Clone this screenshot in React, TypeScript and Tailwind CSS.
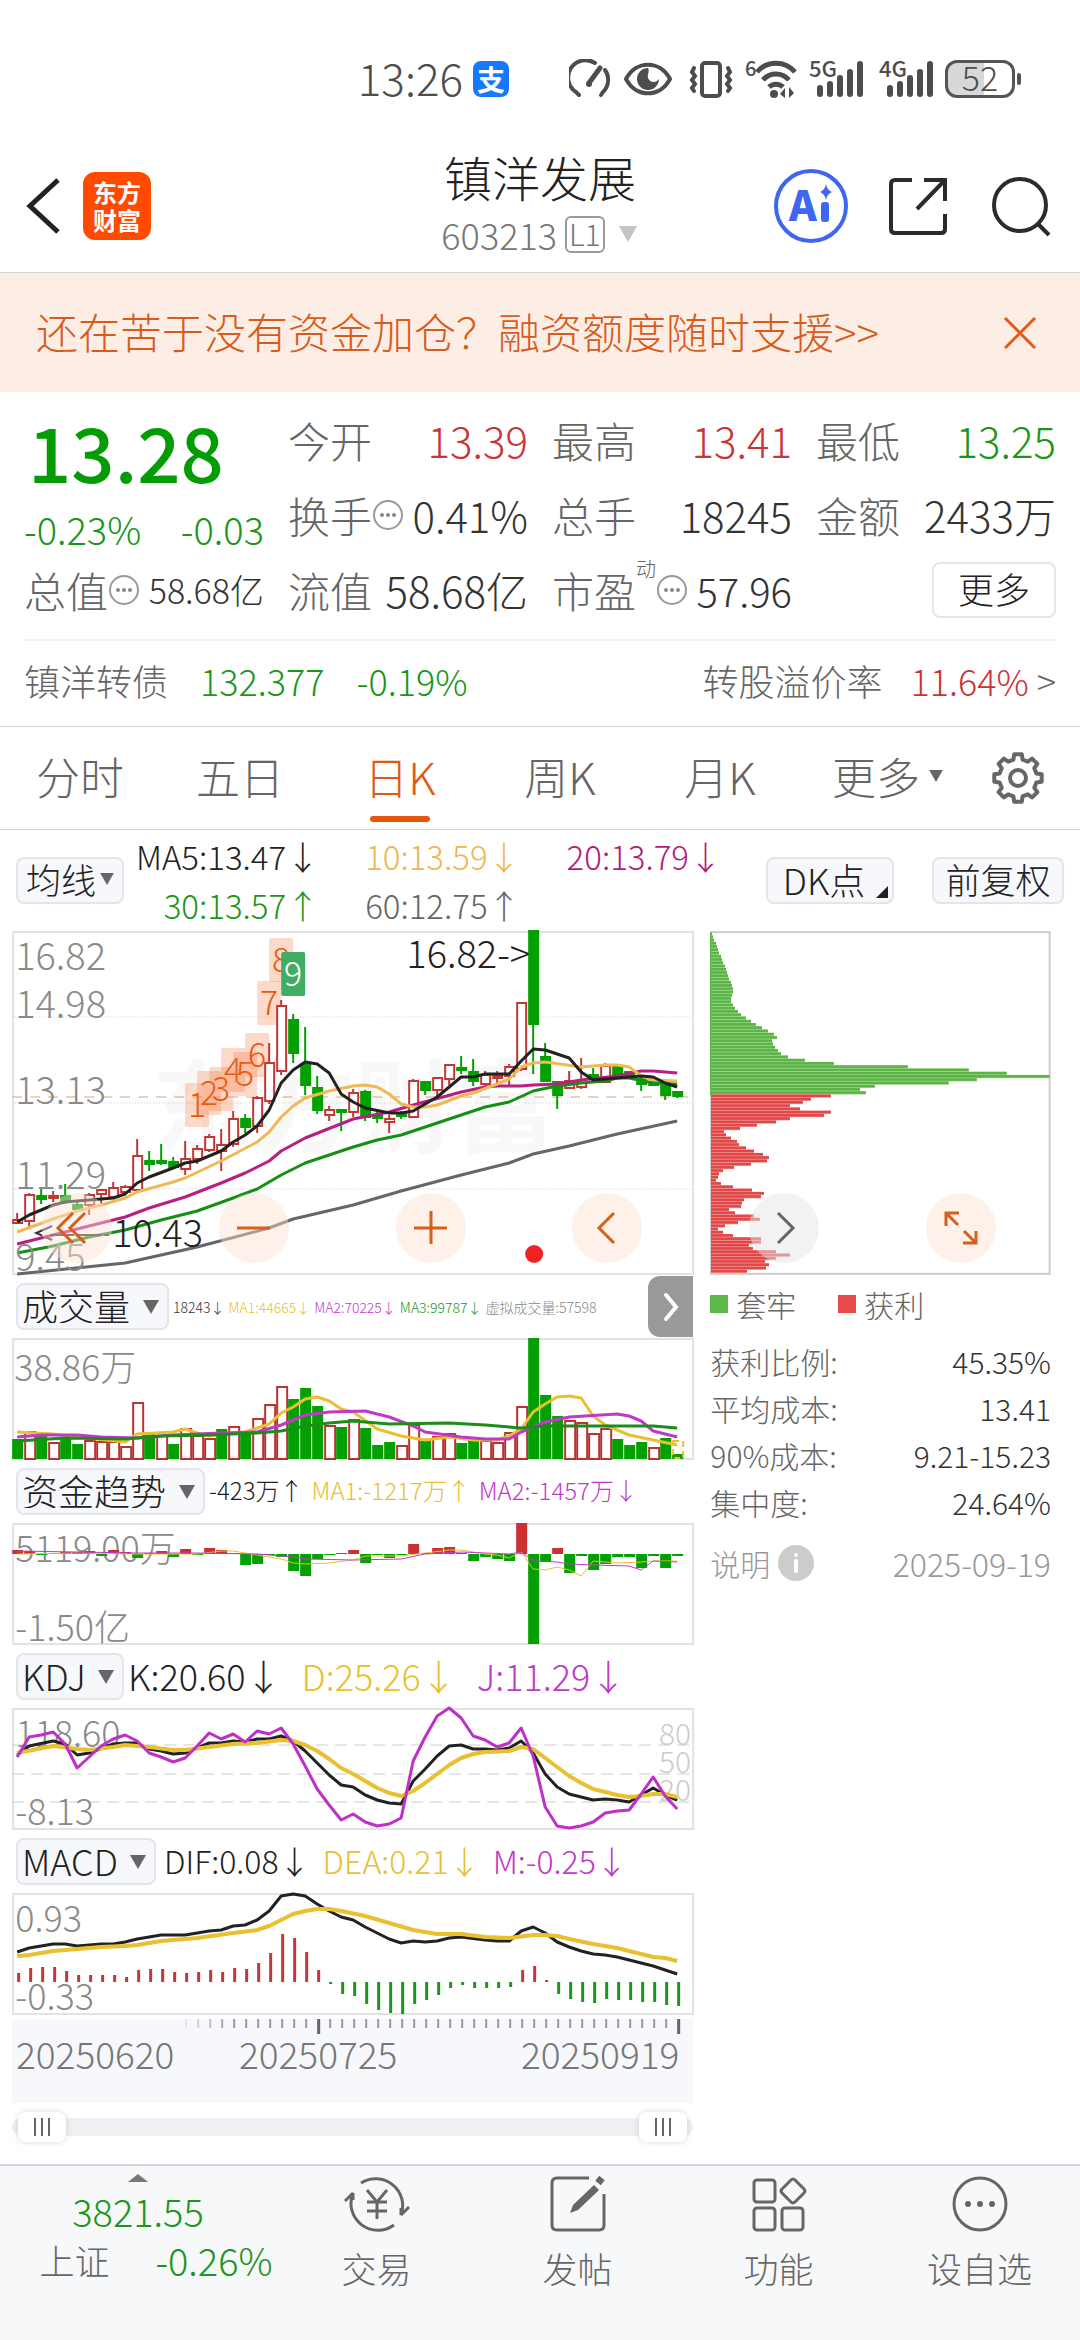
import React from 'react';

type Point = [number, number];
// [up, high, body top, body bottom, low], in chart units from the top
type Candle = [number, number, number, number, number];

const STEP = 12;
const centerX = (i: number) => 5 + i * STEP;

const candles: Candle[] = [
  [1, 282, 289, 292, 292], [1, 262, 264, 290, 297], [0, 258, 265, 268, 273], [1, 260, 265, 267, 271],
  [0, 253, 265, 271, 273], [0, 270, 274, 278, 280], [1, 262, 264, 274, 284], [1, 258, 259, 263, 273],
  [1, 251, 257, 266, 267], [1, 254, 256, 261, 264], [1, 208, 225, 259, 260], [0, 220, 230, 233, 240],
  [0, 213, 230, 232, 234], [0, 226, 231, 236, 238], [1, 210, 228, 238, 244], [1, 214, 218, 228, 233],
  [1, 203, 206, 219, 221], [1, 198, 214, 220, 240], [1, 180, 188, 213, 216], [0, 183, 188, 196, 202],
  [1, 165, 167, 195, 202], [1, 112, 132, 170, 173], [1, 69, 75, 140, 144], [0, 83, 89, 122, 132],
  [0, 96, 134, 154, 164], [0, 145, 157, 179, 183], [1, 175, 179, 184, 190], [0, 179, 179, 181, 200],
  [1, 158, 162, 181, 186], [0, 159, 161, 186, 190], [0, 180, 185, 187, 192], [1, 184, 188, 191, 202],
  [0, 180, 183, 185, 188], [1, 148, 150, 186, 187], [0, 150, 151, 159, 164], [1, 146, 147, 159, 165],
  [1, 133, 134, 148, 154], [0, 125, 137, 139, 143], [0, 128, 141, 150, 155], [1, 140, 144, 153, 156],
  [1, 140, 145, 147, 155], [1, 133, 136, 145, 155], [1, 71, 72, 138, 140], [0, 0, 0, 93, 143],
  [0, 112, 126, 150, 151], [0, 151, 151, 164, 178], [1, 140, 150, 157, 158], [1, 127, 152, 156, 158],
  [0, 137, 144, 147, 150], [1, 132, 135, 151, 152], [0, 135, 135, 145, 146], [0, 140, 141, 145, 147],
  [0, 146, 148, 153, 160], [0, 150, 151, 154, 155], [0, 152, 153, 164, 169], [0, 160, 161, 165, 167],
];

const ma5: Point[] = [[0,291],[1,284],[2,279],[3,274],[4,271],[6,269],[8,267],[9,263],[10,252],[11,246],[13,237],[14,232],[15,230],[17,220],[18,211],[19,204],[20,195],[21,179],[22,152],[23,139],[24,131],[25,133],[26,142],[27,163],[28,171],[29,177],[31,182],[32,182],[33,180],[35,166],[36,156],[37,146],[38,146],[39,143],[41,143],[42,130],[43,118],[44,119],[45,123],[46,127],[47,141],[48,149],[50,147],[52,145],[53,146],[54,152],[55,156]];
const ma10: Point[] = [[0,301],[3,288],[5,280],[7,274],[9,267],[10,261],[13,251],[14,247],[17,230],[20,211],[21,201],[22,186],[23,175],[24,167],[26,160],[28,155],[29,154],[30,156],[31,163],[32,173],[33,176],[34,176],[35,174],[37,165],[38,162],[40,153],[41,148],[42,136],[43,132],[44,131],[47,136],[49,134],[50,134],[51,136],[52,145],[53,149],[55,150]];
const ma20: Point[] = [[0,313],[3,304],[6,295],[9,286],[11,277],[14,266],[17,252],[19,242],[21,230],[22,220],[24,207],[28,188],[31,181],[33,174],[37,161],[39,156],[40,155],[42,155],[43,154],[45,153],[47,149],[50,145],[52,140],[53,140],[55,142]];
const ma30: Point[] = [[0,322],[3,315],[6,306],[9,299],[12,289],[15,280],[18,267],[20,258],[22,244],[24,232],[28,216],[30,209],[32,204],[34,196],[37,184],[39,176],[41,171],[43,160],[45,155],[47,152],[49,150],[50,147],[51,147],[53,152],[55,153]];
const ma60: Point[] = [[0,343],[9,332],[15,316],[21,297],[23,288],[28,274],[32,260],[37,244],[41,232],[43,223],[46,215],[50,203],[55,190]];

const countBadges = [
  { n: 1, x: 173, y: 152 }, { n: 2, x: 185, y: 140 }, { n: 3, x: 197, y: 136 }, { n: 4, x: 209, y: 117 },
  { n: 5, x: 221, y: 121 }, { n: 6, x: 233, y: 102 }, { n: 7, x: 245, y: 50 }, { n: 8, x: 257, y: 7 },
];

// Positive: rising day, negative: falling day
const volumes = [-20, 27, -25, 16, -21, -15, 18, 17, 17, 12, 56, -25, 23, -15, 30, 23, 20, -30, 32, -28, 40, 54, 72, -60, -71, -53, 33, -32, 39, -31, -14, -17, 13, 34, -18, 22, 25, -16, -19, 18, 16, 26, 52, -121, -64, -43, 38, 36, 25, 30, -20, -14, -17, 11, -21, -5];
const volMa1: Point[] = [[0,94],[3,96],[5,99],[9,104],[10,96],[13,94],[14,91],[15,95],[16,98],[17,96],[19,94],[21,86],[22,75],[23,69],[24,61],[25,59],[26,63],[27,71],[28,74],[30,91],[32,98],[34,102],[36,99],[38,102],[40,102],[41,98],[42,91],[43,74],[44,66],[45,59],[46,58],[47,60],[48,78],[49,87],[51,97],[53,102],[55,107]];
const volMa2: Point[] = [[0,99],[2,97],[5,97],[7,99],[10,100],[13,97],[17,95],[20,94],[22,87],[24,77],[26,74],[29,73],[31,79],[33,88],[34,94],[37,99],[39,101],[41,101],[42,94],[44,84],[46,79],[50,76],[51,78],[52,83],[53,93],[55,99]];
const volMa3: Point[] = [[0,103],[4,100],[9,101],[12,98],[16,97],[20,95],[22,93],[24,88],[26,85],[28,83],[31,86],[36,85],[39,87],[42,90],[44,88],[49,88],[53,88],[55,90]];

const funds = [4, 3, -1, 1, 2, 2, 3, -2, 4, 2, -4, 1, 3, -3, 5, -1, 6, 4, 1, -11, -10, -1, -3, -17, -22, -5, -1, 1, 4, -9, -1, -4, -1, 10, 1, 6, 7, 1, -7, -3, -5, -7, 31, -90, -8, 6, -19, -2, -16, -10, -3, -3, -14, -2, -14, -2];
const fundMa1: Point[] = [[0,31],[5,30],[10,31],[15,31],[17,28],[18,28],[20,32],[22,36],[23,40],[24,41],[26,40],[28,37],[29,33],[32,33],[34,30],[36,27],[37,27],[39,31],[40,32],[41,35],[42,29],[43,46],[44,47],[45,44],[46,47],[47,53],[48,38],[50,40],[52,39],[53,38],[55,38]];
const fundMa2: Point[] = [[0,28],[5,29],[10,30],[15,30],[20,31],[23,34],[24,36],[28,37],[32,36],[34,31],[37,29],[41,31],[42,29],[43,38],[45,39],[46,41],[48,42],[51,43],[52,47],[53,38],[55,39]];

const kdjK: Point[] = [[0,47],[1,38],[3,33],[4,36],[5,47],[6,45],[8,36],[9,35],[10,35],[11,41],[12,43],[13,46],[14,45],[16,35],[17,35],[18,33],[19,34],[20,31],[21,31],[22,28],[23,33],[24,43],[25,55],[26,67],[27,77],[28,79],[29,87],[30,92],[31,95],[32,96],[33,73],[34,61],[35,48],[36,38],[37,37],[38,41],[39,41],[40,42],[41,40],[42,33],[43,45],[44,66],[45,79],[46,86],[47,89],[48,92],[49,91],[50,92],[51,94],[52,87],[53,80],[54,87],[55,92]];
const kdjD: Point[] = [[0,45],[3,38],[5,41],[6,42],[8,39],[9,37],[11,39],[13,42],[14,42],[16,39],[18,36],[20,35],[22,32],[23,33],[24,37],[25,43],[26,51],[27,60],[28,66],[29,73],[30,80],[31,85],[32,88],[33,83],[34,75],[35,66],[36,57],[37,50],[38,46],[39,44],[41,43],[42,39],[43,41],[44,50],[45,59],[46,68],[47,75],[48,81],[50,87],[51,89],[52,88],[53,86],[54,86],[55,89]];
const kdjJ: Point[] = [[0,49],[1,29],[2,27],[3,24],[4,36],[5,60],[6,49],[7,38],[8,31],[9,27],[10,33],[11,45],[12,49],[13,54],[14,50],[15,38],[16,25],[17,31],[18,26],[19,34],[20,23],[21,26],[22,20],[23,36],[24,58],[25,81],[26,97],[27,112],[28,106],[29,114],[30,118],[31,116],[32,110],[33,53],[34,29],[35,8],[36,0],[37,10],[38,28],[39,32],[40,39],[41,35],[42,20],[43,48],[44,99],[45,118],[46,120],[47,118],[48,114],[49,105],[50,103],[51,102],[52,86],[53,69],[54,88],[55,101]];

const macdBars = [9, 14, 15, 15, 11, 7, 7, 7, 7, 5, 12, 13, 13, 10, 9, 10, 12, 10, 14, 13, 19, 29, 48, 44, 30, 12, -2, -12, -14, -22, -28, -31, -32, -22, -18, -13, -6, -3, -6, -6, -6, -5, 12, 16, 2, -12, -17, -20, -21, -17, -18, -18, -20, -20, -23, -24];
const dif: Point[] = [[0,59],[1,55],[3,51],[4,51],[5,53],[7,51],[8,51],[9,49],[10,46],[12,42],[14,42],[16,38],[17,37],[18,33],[19,32],[20,27],[21,18],[22,3],[23,1],[24,3],[25,11],[26,18],[27,24],[28,27],[29,34],[30,40],[31,46],[32,50],[33,48],[34,49],[35,48],[36,45],[37,44],[39,47],[40,48],[41,48],[42,38],[43,34],[44,40],[45,49],[46,54],[47,58],[48,61],[49,62],[50,64],[51,67],[53,73],[55,81]];
const dea: Point[] = [[0,63],[1,62],[3,58],[5,56],[7,54],[9,53],[10,52],[12,48],[15,45],[18,40],[20,37],[21,33],[22,27],[23,21],[24,18],[25,16],[26,16],[27,18],[29,23],[31,30],[33,37],[35,41],[37,41],[39,44],[41,45],[43,42],[44,42],[45,43],[46,46],[48,51],[50,55],[53,64],[54,65],[55,68]];

const trapped = [1, 2, 3, 5, 6, 7, 8, 10, 11, 12, 14, 15, 16, 17, 18, 20, 21, 22, 22, 21, 20, 20, 22, 24, 27, 30, 35, 40, 45, 51, 57, 63, 66, 61, 62, 64, 67, 70, 77, 94, 123, 197, 258, 296, 339, 266, 238, 164, 149, 155];
const profit = [120, 100, 92, 79, 89, 120, 113, 79, 65, 46, 29, 13, 15, 20, 26, 28, 35, 43, 52, 58, 56, 40, 23, 12, 8, 7, 5, 10, 22, 41, 53, 50, 33, 31, 30, 18, 24, 43, 49, 27, 14, 7, 12, 22, 50, 50, 38, 42, 65, 79, 65, 54, 58, 55, 36];

function Line({ data, color, width = 3 }: { data: Point[]; color: string; width?: number }) {
  return (
    <polyline
      points={data.map(([i, y]) => `${centerX(i)},${y}`).join(' ')}
      fill="none"
      stroke={color}
      strokeWidth={width}
      strokeLinejoin="round"
    />
  );
}

function SubChart({ label, children }: { label: string; children: React.ReactNode }) {
  return (
    <svg viewBox="0 0 681 122" className="block h-[122px] w-full overflow-visible" role="img" aria-label={label}>
      <rect x="1" y="1" width="680" height="120" fill="none" stroke="#e2e2e2" strokeWidth="2" />
      {children}
    </svg>
  );
}

function Triangle({ className }: { className: string }) {
  return (
    <svg viewBox="0 0 16 14" className={className} aria-hidden="true">
      <path d="M0 0H16L8 14Z" fill="currentColor" />
    </svg>
  );
}

function IndicatorSelect({ name }: { name: string }) {
  return (
    <div className="relative flex h-[47px] shrink-0 items-center rounded-lg border-2 border-[#e2e5ea] bg-[#f7f8fb]">
      <select aria-label={name} className="h-full appearance-none pb-1 pl-1 pr-9 text-4xl leading-none text-[#222] outline-none">
        <option>{name}</option>
      </select>
      <Triangle className="pointer-events-none absolute right-2 h-[14px] w-4 text-[#666]" />
    </div>
  );
}

function MoreDots() {
  return (
    <svg viewBox="0 0 32 32" className="h-8 w-8 shrink-0" aria-hidden="true">
      <circle cx="16" cy="16" r="14" fill="none" stroke="#999" strokeWidth="2" />
      <circle cx="10" cy="16" r="2" fill="#888" />
      <circle cx="16" cy="16" r="2" fill="#888" />
      <circle cx="22" cy="16" r="2" fill="#888" />
    </svg>
  );
}

function Signal({ label }: { label: string }) {
  return (
    <svg viewBox="0 0 54 40" className="h-10 w-[54px] overflow-visible" aria-hidden="true">
      <text x="0" y="18" fontSize="22" fontWeight="500" fill="#4d4d4d">{label}</text>
      {[12, 16, 22, 28, 36].map((h, i) => (
        <rect key={i} x={8 + i * 10} y={38 - h} width="6" height={h} rx="3" fill="#4d4d4d" />
      ))}
    </svg>
  );
}

function StatusBar() {
  return (
    <div className="flex h-[140px] items-start justify-end pr-[59px] pt-[52px] text-[#4d4d4d]">
      <div className="flex h-[54px] items-center">
        <span className="pb-1 text-[44px] leading-none">13:26</span>
        <span className="ml-[10px] flex h-9 w-9 items-center justify-center rounded-lg bg-[#1677ff] text-[28px] font-bold leading-none text-white">支</span>
        <svg viewBox="0 0 42 40" className="ml-[60px] h-10 w-[42px]" fill="none" stroke="#4d4d4d" strokeWidth="4" strokeLinecap="round" aria-hidden="true">
          <path d="M10 36L7 33A17 17 0 0 1 26 4" />
          <path d="M36 11A17 17 0 0 1 34 33L32 36" />
          <path d="M20 24L31 9" strokeWidth="5" />
          <circle cx="20" cy="25" r="3" fill="#4d4d4d" stroke="none" />
        </svg>
        <svg viewBox="0 0 50 40" className="ml-3 h-10 w-[50px]" aria-hidden="true">
          <path d="M3 20C13 1 37 1 47 20C37 39 13 39 3 20Z" fill="none" stroke="#4d4d4d" strokeWidth="4" strokeLinejoin="round" />
          <path d="M25 9A11 11 0 1 0 36 20C33 24 27 24 25 19C24 15 27 13 25 9Z" fill="#4d4d4d" />
        </svg>
        <svg viewBox="0 0 44 40" className="ml-4 h-10 w-11" fill="none" stroke="#4d4d4d" strokeWidth="4" strokeLinecap="round" aria-hidden="true">
          <rect x="13" y="4" width="18" height="33" rx="3" />
          <path d="M5 9L3 13L6 17L3 21L6 25L3 29L5 32" strokeWidth="4" />
          <path d="M39 9L41 13L38 17L41 21L38 25L41 29L39 32" strokeWidth="4" />
        </svg>
        <svg viewBox="0 0 52 40" className="ml-3 h-10 w-[52px] overflow-visible" fill="none" stroke="#4d4d4d" strokeWidth="5" aria-hidden="true">
          <text x="0" y="17" fontSize="20" fontWeight="500" fill="#4d4d4d" stroke="none">6</text>
          <path d="M12 13A25 25 0 0 1 50 13M18 21A17 17 0 0 1 44 21M24 28A10 10 0 0 1 38 28" />
          <circle cx="29" cy="35" r="4" fill="#4d4d4d" stroke="none" />
          <path d="M35 35L40 29V39ZM49 34L44 28V39Z" fill="#4d4d4d" stroke="none" />
        </svg>
        <div className="ml-3 flex gap-4">
          <Signal label="5G" />
          <Signal label="4G" />
        </div>
        <div className="ml-3 flex h-[38px] w-[70px] items-center justify-center rounded-xl border-[3px] border-[#555] bg-[linear-gradient(90deg,#d8d8d8_56%,#fff_56%)] pb-1 text-[34px] leading-none">52</div>
        <span className="ml-[2px] h-3 w-1 rounded bg-[#555]" />
      </div>
    </div>
  );
}

function Header() {
  return (
    <header className="grid h-[133px] grid-cols-[1fr_auto_1fr] items-center border-b border-[#d4d4d8]">
      <div className="flex items-center pl-6">
        <button aria-label="返回">
          <svg viewBox="0 0 38 56" className="h-14 w-[38px]" fill="none" stroke="#222" strokeWidth="5" aria-hidden="true">
            <path d="M34 2L6 28L34 54" />
          </svg>
        </button>
        <div className="ml-[21px] grid h-[68px] w-[68px] place-content-center rounded-xl bg-[#ff4a00] text-center text-2xl font-bold leading-7 text-white">
          <div>东方</div>
          <div>财富</div>
        </div>
      </div>
      <div className="pb-1 text-center">
        <h1 className="text-5xl leading-[60px] text-[#222]">镇洋发展</h1>
        <div className="flex items-center justify-center gap-2 text-4xl leading-[56px] text-[#777]">
          <span>603213</span>
          <span className="flex h-[37px] items-center rounded-md border-2 border-[#999] px-[2px] pb-[2px] text-[30px] leading-none">L1</span>
          <Triangle className="ml-1 h-4 w-[22px] text-[#c4c4c4]" />
        </div>
      </div>
      <div className="flex items-center justify-end pr-[28px]">
        <button aria-label="Ai" className="flex h-[74px] w-[74px] items-center justify-center rounded-full border-4 border-[#3f66f0] text-[#3f66f0]">
          <svg viewBox="0 0 50 44" className="h-11 w-[50px] overflow-visible" aria-hidden="true">
            <text x="3" y="37" fontSize="42" fontWeight="900" fill="currentColor">A</text>
            <rect x="35" y="18" width="8" height="20" rx="3" fill="currentColor" />
            <path d="M40 0Q41 6 46 8Q41 10 40 16Q39 10 34 8Q39 6 40 0Z" fill="currentColor" />
          </svg>
        </button>
        <button aria-label="分享" className="ml-10">
          <svg viewBox="0 0 60 60" className="h-[60px] w-[60px]" fill="none" stroke="#2b2b2b" strokeWidth="4" aria-hidden="true">
            <path d="M24 4H7Q3 4 3 8V53Q3 57 7 57H53Q57 57 57 53V38" />
            <path d="M36 4H57V25M57 4L29 33" />
          </svg>
        </button>
        <button aria-label="搜索" className="ml-[42px]">
          <svg viewBox="0 0 62 62" className="h-[62px] w-[62px]" fill="none" stroke="#2b2b2b" strokeWidth="4" aria-hidden="true">
            <circle cx="30" cy="30" r="26" />
            <path d="M48 49L59 60" />
          </svg>
        </button>
      </div>
    </header>
  );
}

function Banner() {
  return (
    <div className="flex h-[119px] items-center justify-between bg-[#fceee5] pl-9 pr-11 text-[#d95b1c]">
      <a href="#financing" className="pb-1 text-[42px] leading-none">还在苦于没有资金加仓？融资额度随时支援&gt;&gt;</a>
      <button aria-label="关闭">
        <svg viewBox="0 0 32 32" className="h-8 w-8" stroke="#e8590f" strokeWidth="3" aria-hidden="true">
          <path d="M1 1L31 31M31 1L1 31" />
        </svg>
      </button>
    </div>
  );
}

function Quote({ label, value, color = 'text-[#333]', dots = false }: { label: string; value: string; color?: string; dots?: boolean }) {
  return (
    <div className="flex items-center justify-between whitespace-nowrap">
      <span className="flex items-center text-[#666]">
        {label}
        {dots && <MoreDots />}
      </span>
      <span className={color}>{value}</span>
    </div>
  );
}

function QuotePanel() {
  return (
    <section className="border-b border-[#d4d4d8] px-6 pt-[10px]">
      <div className="grid grid-cols-4 grid-rows-[75px_75px_75px] gap-x-6 text-[42px] leading-none">
        <div className="row-span-2 flex flex-col">
          <div className="pl-1 pt-2 text-[76px] font-medium leading-[80px] text-[#049c04]">13.28</div>
          <div className="mt-4 flex justify-between text-[38px] leading-[46px] text-[#1a961a]">
            <span>-0.23%</span>
            <span>-0.03</span>
          </div>
        </div>
        <Quote label="今开" value="13.39" color="text-[#c93535]" />
        <Quote label="最高" value="13.41" color="text-[#c93535]" />
        <Quote label="最低" value="13.25" color="text-[#1a961a]" />
        <Quote label="换手" value="0.41%" dots />
        <Quote label="总手" value="18245" />
        <Quote label="金额" value="2433万" />
        <div className="flex items-center justify-between whitespace-nowrap">
          <span className="flex items-center text-[#666]">总值<MoreDots /></span>
          <span className="text-[34px] text-[#333]">58.68亿</span>
        </div>
        <Quote label="流值" value="58.68亿" />
        <div className="flex items-center justify-between whitespace-nowrap">
          <span className="flex items-center text-[#666]">
            市盈
            <sup className="self-start text-xl leading-none">动</sup>
            <MoreDots />
          </span>
          <span className="text-[40px] text-[#333]">57.96</span>
        </div>
        <div className="flex items-center justify-end">
          <button className="h-14 w-[124px] rounded-lg border-2 border-[#e6e6e6] pb-1 text-4xl leading-none text-[#222]">更多</button>
        </div>
      </div>
      <a href="#bond" className="mt-3 flex h-[87px] items-center border-t-2 border-[#f5f5f5] pb-2 text-4xl leading-none text-[#666]">
        <span>镇洋转债</span>
        <span className="ml-8 text-[#1a961a]">132.377</span>
        <span className="ml-8 text-[#1a961a]">-0.19%</span>
        <span className="ml-auto">转股溢价率</span>
        <span className="ml-7 text-[#c93535]">11.64%</span>
        <span className="ml-2">&gt;</span>
      </a>
    </section>
  );
}

// Outline of an eight-toothed gear around (27, 27)
const gearPoints = Array.from({ length: 32 }, (_, i) => {
  const tooth = Math.floor(i / 4);
  const offset = [-14, -9, 9, 14][i % 4];
  const radius = i % 4 === 1 || i % 4 === 2 ? 24 : 19;
  const angle = ((tooth * 45 + offset) * Math.PI) / 180;
  return `${(27 + radius * Math.sin(angle)).toFixed(1)},${(27 - radius * Math.cos(angle)).toFixed(1)}`;
}).join(' ');

function PeriodTabs() {
  const tabs = ['分时', '五日', '日K', '周K', '月K'];
  return (
    <nav className="grid h-[103px] grid-cols-[160fr_160fr_160fr_160fr_160fr_156fr_124fr] border-b border-[#d4d4d8] text-[44px] leading-none text-[#666]">
      {tabs.map(tab => (
        <button key={tab} className={`relative pb-1 ${tab === '日K' ? 'text-[#dd5a16]' : ''}`}>
          {tab}
          {tab === '日K' && <span className="absolute bottom-[7px] left-1/2 h-[6px] w-[60px] -translate-x-1/2 rounded-full bg-[#e4570d]" />}
        </button>
      ))}
      <button className="flex items-center justify-end gap-2 pb-1 pr-3">
        更多
        <Triangle className="h-3 w-4 shrink-0 text-[#666]" />
      </button>
      <button aria-label="设置" className="flex items-center justify-center">
        <svg viewBox="0 0 54 54" className="h-[54px] w-[54px]" fill="none" stroke="#666" strokeWidth="4" strokeLinejoin="round" aria-hidden="true">
          <polygon points={gearPoints} />
          <circle cx="27" cy="27" r="8" />
        </svg>
      </button>
    </nav>
  );
}

function AverageBar() {
  return (
    <div className="flex h-[101px] items-center whitespace-nowrap pl-4 pr-4 leading-none">
      <button className="flex h-[47px] w-[108px] items-center justify-center rounded-lg border-2 border-[#e2e5ea] bg-[#f7f8fb] pb-1 text-[35px] text-[#222]">
        均线
        <Triangle className="ml-1 h-3 w-[14px] text-[#666]" />
      </button>
      <div className="ml-3 grid grid-cols-[auto_auto_auto] gap-x-[46px] text-[33px] leading-[49px]">
        <span className="text-[#222]">MA5:13.47↓</span>
        <span className="text-[#edb84e]">10:13.59↓</span>
        <span className="text-[#b01c7c]">20:13.79↓</span>
        <span className="text-right text-[#1a961a]">30:13.57↑</span>
        <span className="text-[#666]">60:12.75↑</span>
      </div>
      <button className="relative ml-auto h-[47px] w-[128px] rounded-lg border-2 border-[#e2e5ea] bg-[#f7f8fb] pb-1 pr-3 text-4xl leading-none text-[#222]">
        DK点
        <svg viewBox="0 0 12 12" className="absolute bottom-1 right-1 h-3 w-3" aria-hidden="true">
          <path d="M12 0V12H0Z" fill="#222" />
        </svg>
      </button>
      <button className="ml-[38px] h-[47px] w-[132px] rounded-lg border-2 border-[#e2e5ea] bg-[#f7f8fb] pb-1 text-[35px] leading-none text-[#222]">前复权</button>
    </div>
  );
}

function CandleChart() {
  return (
    <svg viewBox="0 0 681 344" className="block h-[344px] w-full overflow-visible" role="img" aria-label="日K线">
      <text x="140" y="214" fontSize="101" fontWeight="700" fill="#f8f8f8">东方财富</text>
      <rect x="1" y="1" width="680" height="342" fill="none" stroke="#e2e2e2" strokeWidth="2" />
      {[86, 172, 258].map(y => (
        <line key={y} x1="0" x2="681" y1={y} y2={y} stroke="#ccc" strokeDasharray="1 2" />
      ))}
      <line x1="0" x2="676" y1="166" y2="166" stroke="#d0a878" strokeDasharray="10 8" />
      {countBadges.map(b => (
        <g key={b.n}>
          <rect x={b.x} y={b.y} width="24" height="44" rx="2" fill="#f9783c" fillOpacity="0.28" />
          <text x={b.x + 12} y={b.y + 34} fontSize="34" textAnchor="middle" fill="#e8590f">{b.n}</text>
        </g>
      ))}
      {candles.map(([up, high, top, bottom, low], i) => {
        const x = centerX(i);
        const color = up ? '#c23636' : '#03a003';
        return (
          <g key={i} stroke={color} strokeWidth="2">
            <line x1={x} x2={x} y1={high} y2={top} />
            <line x1={x} x2={x} y1={bottom} y2={low} />
            <rect x={x - 4} y={top} width="9" height={Math.max(bottom - top, 1)} fill={up ? '#fff' : color} />
          </g>
        );
      })}
      <Line data={ma60} color="#666" />
      <Line data={ma30} color="#159015" />
      <Line data={ma20} color="#b81f80" />
      <Line data={ma10} color="#efba55" />
      <Line data={ma5} color="#222" />
      <rect x="269" y="21" width="24" height="44" rx="2" fill="#3fae63" />
      <text x="281" y="55" fontSize="34" textAnchor="middle" fill="#fff">9</text>
      <g fontSize="38" fill="#8a8a8a">
        <text x="3" y="39">16.82</text>
        <text x="3" y="87">14.98</text>
        <text x="3" y="173">13.13</text>
        <text x="3" y="258">11.29</text>
        <text x="3" y="340">9.45</text>
      </g>
      <g fontSize="38" fill="#222">
        <text x="518" y="37" textAnchor="end">16.82-&gt;</text>
        <text x="100" y="316">10.43</text>
      </g>
      <path d="M40 295L24 302L40 309M38 304H97" fill="none" stroke="#333" strokeWidth="2" strokeDasharray="24 3" />
      <circle cx="522" cy="323" r="9" fill="#ee2424" />
    </svg>
  );
}

function VolumeChart() {
  return (
    <SubChart label="成交量">
      <text x="2" y="43" fontSize="36" fill="#8a8a8a">38.86万</text>
      {volumes.map((v, i) => {
        const h = Math.abs(v);
        return v > 0
          ? <rect key={i} x={i * STEP + 1} y={121 - h} width="10" height={h} fill="#fff" stroke="#b83434" strokeWidth="2" />
          : <rect key={i} x={i * STEP} y={121 - h} width="11" height={h} fill="#03a003" />;
      })}
      <rect x="661" y="103" width="10" height="17" fill="none" stroke="#e8c030" strokeWidth="2" strokeDasharray="6 4" />
      <Line data={volMa1} color="#e8c030" />
      <Line data={volMa2} color="#bf3ac6" />
      <Line data={volMa3} color="#1c8c1c" />
    </SubChart>
  );
}

function FundChart() {
  return (
    <SubChart label="资金趋势">
      <text x="3" y="39" fontSize="36" fill="#8a8a8a">5119.00万</text>
      <text x="3" y="118" fontSize="36" fill="#8a8a8a">-1.50亿</text>
      {funds.map((v, i) => (
        <rect key={i} x={i * STEP} y={v > 0 ? 31 - v : 31} width="11" height={Math.max(Math.abs(v), 1)} fill={v > 0 ? '#cc3030' : '#03a003'} />
      ))}
      <Line data={fundMa1} color="#e8c030" width={1} />
      <Line data={fundMa2} color="#bf3ac6" width={1} />
    </SubChart>
  );
}

function KdjChart() {
  return (
    <SubChart label="KDJ">
      {[37, 66, 94].map(y => (
        <line key={y} x1="0" x2="681" y1={y} y2={y} stroke="#ccc" strokeDasharray="12 7" />
      ))}
      <text x="3" y="39" fontSize="36" fill="#8a8a8a">118.60</text>
      <text x="3" y="117" fontSize="36" fill="#8a8a8a">-8.13</text>
      <g fontSize="30" fill="#ccc" textAnchor="end">
        <text x="679" y="37">80</text>
        <text x="679" y="65">50</text>
        <text x="679" y="93">20</text>
      </g>
      <Line data={kdjK} color="#222" />
      <Line data={kdjD} color="#e8c030" width={4} />
      <Line data={kdjJ} color="#bf30c6" />
    </SubChart>
  );
}

function MacdChart() {
  return (
    <SubChart label="MACD">
      <text x="3" y="39" fontSize="36" fill="#8a8a8a">0.93</text>
      <text x="3" y="117" fontSize="36" fill="#8a8a8a">-0.33</text>
      {macdBars.map((v, i) => (
        <rect key={i} x={centerX(i)} y={v > 0 ? 89 - v : 89} width="3" height={Math.abs(v)} fill={v > 0 ? '#c03838' : '#1c961c'} />
      ))}
      <Line data={dif} color="#222" />
      <Line data={dea} color="#e8c030" width={4} />
    </SubChart>
  );
}

function DateAxis() {
  return (
    <div className="mt-1 h-[84px] bg-[#f7f8fb]">
      <svg viewBox="0 0 681 16" className="block h-4 w-full" aria-hidden="true">
        {Array.from({ length: 42 }, (_, k) => k + 14).map(i => {
          const major = i === 25 || i === 55;
          return (
            <rect
              key={i}
              x={centerX(i)}
              y="0"
              width={major ? 3 : 2}
              height={major ? 15 : 9}
              fill={major ? '#666' : '#999'}
              opacity={i < 18 ? (i - 13) / 5 : 1}
            />
          );
        })}
      </svg>
      <div className="flex justify-between pl-[4px] pr-[14px] text-[37px] leading-9 text-[#777]">
        <span>20250620</span>
        <span className="mr-[59px]">20250725</span>
        <span>20250919</span>
      </div>
    </div>
  );
}

const rangeClass =
  'pointer-events-none absolute inset-x-[6px] top-0 h-[30px] appearance-none bg-transparent ' +
  '[&::-webkit-slider-thumb]:pointer-events-auto [&::-webkit-slider-thumb]:h-[30px] [&::-webkit-slider-thumb]:w-12 ' +
  '[&::-webkit-slider-thumb]:appearance-none [&::-webkit-slider-thumb]:rounded-lg [&::-webkit-slider-thumb]:bg-white ' +
  '[&::-webkit-slider-thumb]:bg-[repeating-linear-gradient(90deg,#666_0_2px,transparent_2px_7px)] ' +
  '[&::-webkit-slider-thumb]:bg-[length:16px_18px] [&::-webkit-slider-thumb]:bg-center [&::-webkit-slider-thumb]:bg-no-repeat ' +
  '[&::-webkit-slider-thumb]:shadow-[0_0_6px_rgba(0,0,0,0.15)]';

function RangeSlider() {
  return (
    <div className="relative mt-[9px] flex h-[30px] items-center">
      <div className="h-[18px] w-full rounded-full bg-[#f0f0f4]" />
      <input type="range" aria-label="开始日期" min="0" max="100" defaultValue="0" className={rangeClass} />
      <input type="range" aria-label="结束日期" min="0" max="100" defaultValue="100" className={rangeClass} />
    </div>
  );
}

function ChipPanel() {
  const rows = [
    ['获利比例:', '45.35%'],
    ['平均成本:', '13.41'],
    ['90%成本:', '9.21-15.23'],
    ['集中度:', '24.64%'],
  ];
  return (
    <section className="leading-none">
      <svg viewBox="0 0 341 344" className="block h-[344px] w-full" role="img" aria-label="筹码分布">
        <rect x="1" y="1" width="339" height="342" fill="none" stroke="#ccc" strokeWidth="2" />
        <rect x="0" y="1" width="1" height="163" fill="#5cb84a" />
        {trapped.map((w, i) => (
          <g key={i}>
            <rect x="1" y={1 + i * 3.25} width={w} height="3.25" fill="#a0dc90" />
            <rect x="1" y={1 + i * 3.25} width={w} height="2.6" fill="#5cb447" />
          </g>
        ))}
        {profit.map((w, i) => (
          <g key={i}>
            <rect x="1" y={163.5 + i * 3.25} width={w} height="3.25" fill="#f39a9a" />
            <rect x="1" y={163.5 + i * 3.25} width={w} height="2.6" fill="#e04848" />
          </g>
        ))}
      </svg>
      <div className="mt-[13px] flex h-8 items-center text-[30px] text-[#666]">
        <span className="mr-2 h-[18px] w-[18px] bg-[#5cb947]" />
        套牢
        <span className="ml-[42px] mr-2 h-[18px] w-[18px] bg-[#e64a4a]" />
        获利
      </div>
      <dl className="mt-[18px] text-[30px] leading-[47px] text-[#666]">
        {rows.map(([name, value]) => (
          <div key={name} className="flex justify-between">
            <dt>{name}</dt>
            <dd className="text-[#333]">{value}</dd>
          </div>
        ))}
      </dl>
      <div className="mt-4 flex items-center text-[30px] leading-[42px] text-[#999]">
        说明
        <button aria-label="说明" className="ml-2">
          <svg viewBox="0 0 36 36" className="h-9 w-9" aria-hidden="true">
            <circle cx="18" cy="18" r="18" fill="#ccc" />
            <circle cx="18" cy="10" r="2" fill="#fff" />
            <rect x="16" y="14" width="4" height="14" rx="2" fill="#fff" />
          </svg>
        </button>
        <span className="ml-auto text-[32px]">2025-09-19</span>
      </div>
    </section>
  );
}

function ChartControls() {
  const controls = [
    { label: '最早', d: 'M31 20L16 35L31 50M43 20L28 35L43 50' },
    { label: '缩小', d: 'M18 35H51' },
    { label: '放大', d: 'M18 35H51M35 18V51' },
    { label: '向左', d: 'M42 20L27 35L42 50' },
    { label: '向右', d: 'M29 20L44 35L29 50' },
    { label: '全屏', d: 'M20 33V20H33M20 20L32 32M50 38V50H37M50 50L38 38' },
  ];
  return (
    <div className="absolute inset-x-0 top-[262px] flex justify-between pl-[42px] pr-[84px]">
      {controls.map(c => (
        <button
          key={c.label}
          aria-label={c.label}
          className={`h-[70px] w-[70px] rounded-full ${c.label === '向右' ? 'bg-[#e6e6e6]/50 text-[#666]' : 'bg-[#fbdfd0]/45 text-[#d65f1e]'}`}
        >
          <svg viewBox="0 0 70 70" fill="none" stroke="currentColor" strokeWidth="3" aria-hidden="true">
            <path d={c.d} />
          </svg>
        </button>
      ))}
    </div>
  );
}

function Charts() {
  return (
    <main className="relative grid grid-cols-[2fr_1fr] gap-x-[17px] pb-[21px] pl-3 pr-[29px]">
      <div className="min-w-0 whitespace-nowrap leading-none">
        <CandleChart />
        <div className="flex h-[63px] items-center pl-1 text-sm">
          <IndicatorSelect name="成交量" />
          <div className="ml-1 flex gap-1">
            <span className="text-[#333]">18243↓</span>
            <span className="text-[#e8c030]">MA1:44665↓</span>
            <span className="text-[#bf3ac6]">MA2:70225↓</span>
            <span className="text-[#1a961a]">MA3:99787↓</span>
            <span className="text-[#888]">虚拟成交量:57598</span>
          </div>
          <button aria-label="展开" className="ml-auto flex h-[61px] w-[45px] items-center justify-center rounded-l-xl bg-[#999]">
            <svg viewBox="0 0 16 30" className="h-[30px] w-4" fill="none" stroke="#fff" strokeWidth="4" strokeLinecap="round" aria-hidden="true">
              <path d="M3 3L13 15L3 27" />
            </svg>
          </button>
        </div>
        <VolumeChart />
        <div className="flex h-[63px] items-center pl-1 text-2xl leading-none">
          <IndicatorSelect name="资金趋势" />
          <div className="ml-1 flex gap-2 pb-1">
            <span className="text-[#222]">-423万↑</span>
            <span className="text-[#e8c030]">MA1:-1217万↑</span>
            <span className="text-[#bf3ac6]">MA2:-1457万↓</span>
          </div>
        </div>
        <FundChart />
        <div className="flex h-[63px] items-center pl-1 text-4xl leading-none">
          <IndicatorSelect name="KDJ" />
          <div className="ml-1 flex gap-5 pb-1">
            <span className="text-[#222]">K:20.60↓</span>
            <span className="text-[#e8c030]">D:25.26↓</span>
            <span className="text-[#bf3ac6]">J:11.29↓</span>
          </div>
        </div>
        <KdjChart />
        <div className="flex h-[63px] items-center pl-1 text-[32px] leading-none">
          <IndicatorSelect name="MACD" />
          <div className="ml-2 flex gap-3 pb-1">
            <span className="text-[#222]">DIF:0.08↓</span>
            <span className="text-[#e8c030]">DEA:0.21↓</span>
            <span className="text-[#bf3ac6]">M:-0.25↓</span>
          </div>
        </div>
        <MacdChart />
        <DateAxis />
        <RangeSlider />
      </div>
      <ChipPanel />
      <ChartControls />
    </main>
  );
}

const navIcons = [
  {
    label: '交易',
    icon: (
      <>
        <path d="M17 11A27 27 0 0 1 57 43L65 35M57 43V36" />
        <path d="M50 53A27 27 0 0 1 9 21L1 29M9 21V28" />
        <path d="M23 18L33 30L43 18M33 30V47M23 30H43M23 39H43" />
      </>
    ),
  },
  {
    label: '发帖',
    icon: (
      <>
        <path d="M44 6H12Q7 6 7 11V53Q7 58 12 58H54Q59 58 59 53V22" />
        <path d="M53 11L57 6" strokeWidth="7" />
        <path d="M49 13L54 18L33 38L25 41L28 33Z" fill="currentColor" stroke="none" />
      </>
    ),
  },
  {
    label: '功能',
    icon: (
      <>
        <rect x="8" y="8" width="21" height="22" rx="3" />
        <rect x="8" y="36" width="21" height="22" rx="3" />
        <rect x="36" y="36" width="21" height="22" rx="3" />
        <path d="M45 8Q47 6 49 8L58 17Q60 19 58 21L49 30Q47 32 45 30L36 21Q34 19 36 17Z" />
      </>
    ),
  },
  {
    label: '设自选',
    icon: (
      <>
        <circle cx="33" cy="32" r="26" />
        <circle cx="21" cy="32" r="3" fill="currentColor" stroke="none" />
        <circle cx="33" cy="32" r="3" fill="currentColor" stroke="none" />
        <circle cx="45" cy="32" r="3" fill="currentColor" stroke="none" />
      </>
    ),
  },
];

function BottomNav() {
  return (
    <footer className="flex h-44 border-t-2 border-[#d4d4dc] bg-[#f7f8fa] text-[35px] leading-[48px] text-[#666]">
      <button className="flex flex-[276] flex-col items-center pt-2">
        <svg viewBox="0 0 20 8" className="h-2 w-5" aria-hidden="true">
          <path d="M10 0L20 8H0Z" fill="#777" />
        </svg>
        <span className="mt-1 text-[38px] leading-[50px] text-[#1a961a]">3821.55</span>
        <span className="flex gap-[46px] pl-9">
          上证
          <span className="text-[38px] text-[#1a961a]">-0.26%</span>
        </span>
      </button>
      {navIcons.map(item => (
        <button key={item.label} className="flex flex-[201] flex-col items-center pt-[6px]">
          <svg viewBox="0 0 66 64" className="h-16 w-[66px]" fill="none" stroke="currentColor" strokeWidth="3" aria-hidden="true">
            {item.icon}
          </svg>
          <span className="mt-2">{item.label}</span>
        </button>
      ))}
    </footer>
  );
}

export default function App() {
  return (
    <div className="flex min-h-screen flex-col bg-white font-['Noto_Sans_CJK_SC',sans-serif] font-light">
      <StatusBar />
      <Header />
      <Banner />
      <QuotePanel />
      <PeriodTabs />
      <AverageBar />
      <Charts />
      <div className="mt-auto">
        <BottomNav />
      </div>
    </div>
  );
}
